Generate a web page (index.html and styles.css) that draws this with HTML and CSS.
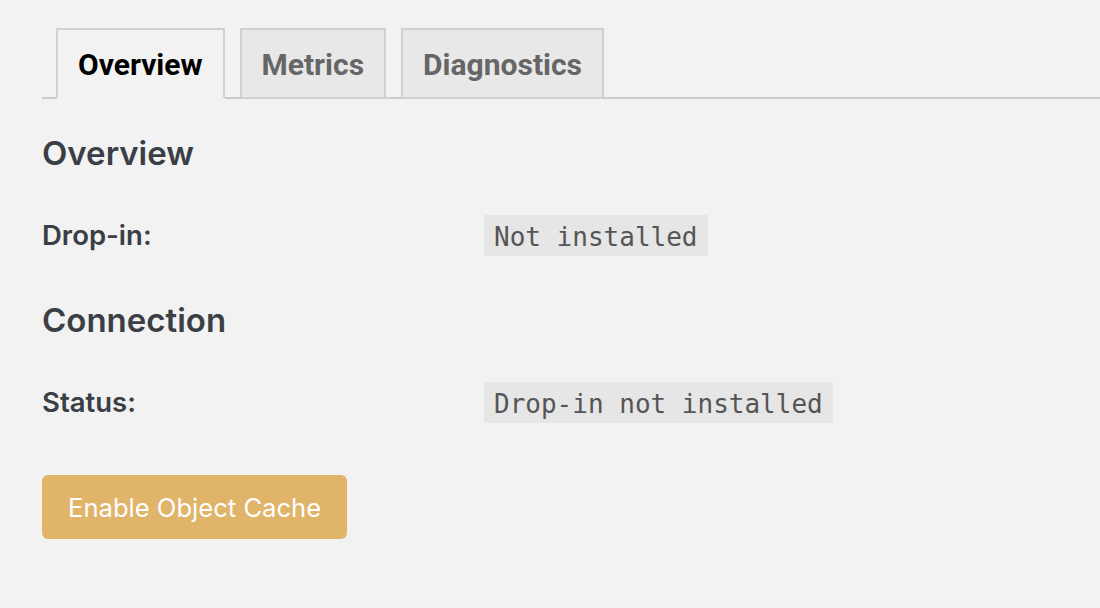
FILE: index.html
```html
<!DOCTYPE html>
<html>
<head>
<meta charset="utf-8">
<link rel="stylesheet" href="styles.css">
</head>
<body>
<div class="wrap">
  <nav class="tabs">
    <a class="tab active">Overview</a>
    <a class="tab">Metrics</a>
    <a class="tab">Diagnostics</a>
  </nav>
  <section class="content">
    <h2 class="title">Overview</h2>
    <div class="row">
      <div class="label">Drop-in:</div>
      <div class="value"><code>Not installed</code></div>
    </div>
    <h2 class="title title-2">Connection</h2>
    <div class="row">
      <div class="label">Status:</div>
      <div class="value"><code>Drop-in not installed</code></div>
    </div>
    <div class="actions">
      <button class="btn">Enable Object Cache</button>
    </div>
  </section>
</div>
</body>
</html>
```

FILE: styles.css
```css
html, body {
  margin: 0;
  padding: 0;
  background: #f2f2f2;
  width: 1100px;
  height: 608px;
  overflow: hidden;
}
body {
  font-family: Inter, "Noto Sans", "Liberation Sans", sans-serif;
  color: #3a3f45;
}
.wrap {
  padding: 28px 0 0 42px;
}
.tabs {
  display: flex;
  gap: 15px;
  padding-left: 14px;
  border-bottom: 2px solid #cccccc;
  height: 69px;
}
.tab {
  display: block;
  box-sizing: border-box;
  height: 71px;
  padding: 0 20px;
  line-height: 69px;
  border: 2px solid #d0d0d0;
  background: #e8e8e8;
  color: #666666;
  font-family: Roboto, "Liberation Sans", sans-serif;
  font-weight: 700;
  font-size: 30px;
  text-decoration: none;
}
.tab.active {
  background: #f2f2f2;
  color: #000000;
  border-bottom-color: #f2f2f2;
}
.content {
  padding-top: 34px;
}
.title {
  margin: 0;
  font-size: 33px;
  line-height: 40px;
  font-weight: 600;
  color: #3a3f45;
}
.title-2 {
  margin-top: 44px;
}
.row {
  display: flex;
  align-items: center;
  margin-top: 41px;
  height: 42px;
}
.label {
  width: 442px;
  font-size: 27.5px;
  font-weight: 600;
}
.value code {
  display: inline-block;
  background: #e6e6e6;
  color: #555555;
  font-family: "DejaVu Sans Mono", "Liberation Mono", monospace;
  font-size: 26px;
  line-height: 38px;
  padding: 3px 10px 0;
}
.actions {
  margin-top: 52px;
}
.btn {
  display: inline-block;
  box-sizing: border-box;
  background: #e0b469;
  color: #ffffff;
  border: 0;
  border-radius: 6px;
  height: 64px;
  padding: 0 26px;
  font-family: Inter, "Noto Sans", sans-serif;
  font-size: 25.6px;
}
```
